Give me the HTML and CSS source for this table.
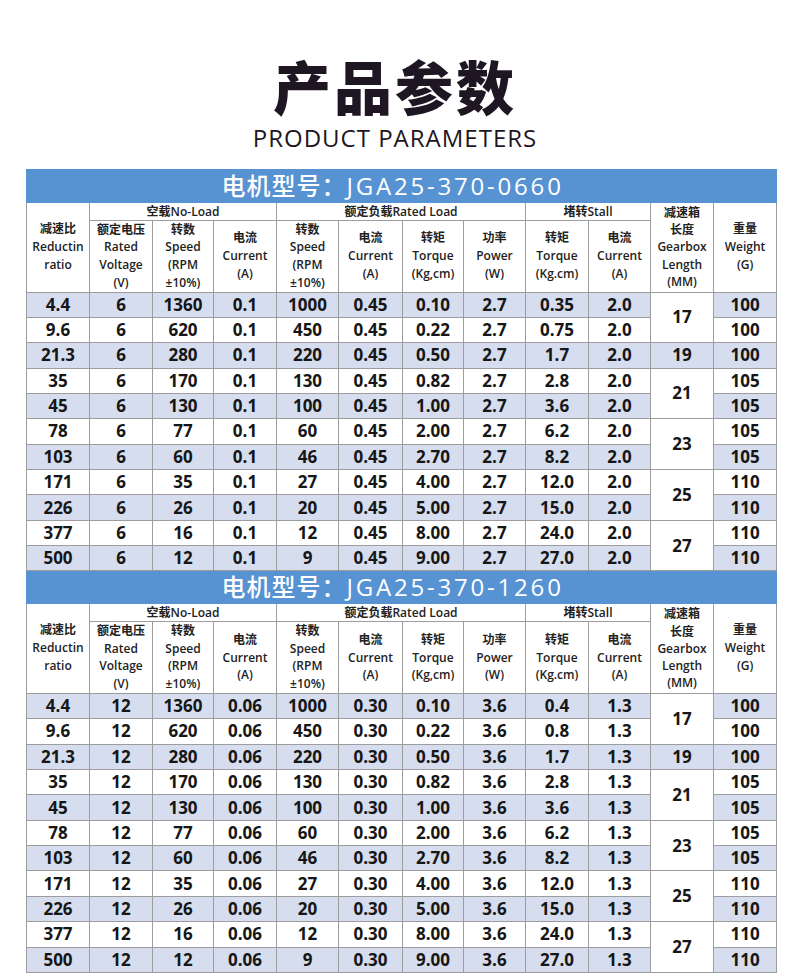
FILE: index.html
```html
<!DOCTYPE html>
<html lang="zh-CN">
<head>
<meta charset="utf-8">
<title>产品参数</title>
<link rel="stylesheet" href="styles.css">
</head>
<body>
<header class="head">
  <h1 class="title">产品参数</h1>
  <p class="subtitle">PRODUCT PARAMETERS</p>
</header>
<table class="spec">
  <colgroup>
    <col style="width:63px"><col style="width:63px"><col style="width:61px"><col style="width:63px">
    <col style="width:62px"><col style="width:64px"><col style="width:61px"><col style="width:62px">
    <col style="width:63px"><col style="width:62px"><col style="width:63px"><col style="width:63px">
  </colgroup>
  <tbody>
    <tr class="model"><td colspan="12">电机型号：<span class="code">JGA25-370-0660</span></td></tr>
    <tr class="h1">
      <td rowspan="2" class="side">减速比<br>Reductin<br>ratio</td>
      <td colspan="3">空载No-Load</td>
      <td colspan="4">额定负载Rated Load</td>
      <td colspan="2">堵转Stall</td>
      <td rowspan="2" class="tall">减速箱<br>长度<br>Gearbox<br>Length<br>(MM)</td>
      <td rowspan="2" class="side">重量<br>Weight<br>(G)</td>
    </tr>
    <tr class="h2">
      <td>额定电压<br>Rated<br>Voltage<br>(V)</td>
      <td>转数<br>Speed<br>(RPM<br>±10%)</td>
      <td>电流<br>Current<br>(A)</td>
      <td>转数<br>Speed<br>(RPM<br>±10%)</td>
      <td>电流<br>Current<br>(A)</td>
      <td>转矩<br>Torque<br>(Kg,cm)</td>
      <td>功率<br>Power<br>(W)</td>
      <td>转矩<br>Torque<br>(Kg.cm)</td>
      <td>电流<br>Current<br>(A)</td>
    </tr>
    <tr class="d alt"><td>4.4</td><td>6</td><td>1360</td><td>0.1</td><td>1000</td><td>0.45</td><td>0.10</td><td>2.7</td><td>0.35</td><td>2.0</td><td class="merge" rowspan="2">17</td><td>100</td></tr>
    <tr class="d"><td>9.6</td><td>6</td><td>620</td><td>0.1</td><td>450</td><td>0.45</td><td>0.22</td><td>2.7</td><td>0.75</td><td>2.0</td><td>100</td></tr>
    <tr class="d alt"><td>21.3</td><td>6</td><td>280</td><td>0.1</td><td>220</td><td>0.45</td><td>0.50</td><td>2.7</td><td>1.7</td><td>2.0</td><td>19</td><td>100</td></tr>
    <tr class="d"><td>35</td><td>6</td><td>170</td><td>0.1</td><td>130</td><td>0.45</td><td>0.82</td><td>2.7</td><td>2.8</td><td>2.0</td><td class="merge" rowspan="2">21</td><td>105</td></tr>
    <tr class="d alt"><td>45</td><td>6</td><td>130</td><td>0.1</td><td>100</td><td>0.45</td><td>1.00</td><td>2.7</td><td>3.6</td><td>2.0</td><td>105</td></tr>
    <tr class="d"><td>78</td><td>6</td><td>77</td><td>0.1</td><td>60</td><td>0.45</td><td>2.00</td><td>2.7</td><td>6.2</td><td>2.0</td><td class="merge" rowspan="2">23</td><td>105</td></tr>
    <tr class="d alt"><td>103</td><td>6</td><td>60</td><td>0.1</td><td>46</td><td>0.45</td><td>2.70</td><td>2.7</td><td>8.2</td><td>2.0</td><td>105</td></tr>
    <tr class="d"><td>171</td><td>6</td><td>35</td><td>0.1</td><td>27</td><td>0.45</td><td>4.00</td><td>2.7</td><td>12.0</td><td>2.0</td><td class="merge" rowspan="2">25</td><td>110</td></tr>
    <tr class="d alt"><td>226</td><td>6</td><td>26</td><td>0.1</td><td>20</td><td>0.45</td><td>5.00</td><td>2.7</td><td>15.0</td><td>2.0</td><td>110</td></tr>
    <tr class="d"><td>377</td><td>6</td><td>16</td><td>0.1</td><td>12</td><td>0.45</td><td>8.00</td><td>2.7</td><td>24.0</td><td>2.0</td><td class="merge" rowspan="2">27</td><td>110</td></tr>
    <tr class="d alt"><td>500</td><td>6</td><td>12</td><td>0.1</td><td>9</td><td>0.45</td><td>9.00</td><td>2.7</td><td>27.0</td><td>2.0</td><td>110</td></tr>

    <tr class="model"><td colspan="12">电机型号：<span class="code">JGA25-370-1260</span></td></tr>
    <tr class="h1">
      <td rowspan="2" class="side">减速比<br>Reductin<br>ratio</td>
      <td colspan="3">空载No-Load</td>
      <td colspan="4">额定负载Rated Load</td>
      <td colspan="2">堵转Stall</td>
      <td rowspan="2" class="tall">减速箱<br>长度<br>Gearbox<br>Length<br>(MM)</td>
      <td rowspan="2" class="side">重量<br>Weight<br>(G)</td>
    </tr>
    <tr class="h2">
      <td>额定电压<br>Rated<br>Voltage<br>(V)</td>
      <td>转数<br>Speed<br>(RPM<br>±10%)</td>
      <td>电流<br>Current<br>(A)</td>
      <td>转数<br>Speed<br>(RPM<br>±10%)</td>
      <td>电流<br>Current<br>(A)</td>
      <td>转矩<br>Torque<br>(Kg,cm)</td>
      <td>功率<br>Power<br>(W)</td>
      <td>转矩<br>Torque<br>(Kg.cm)</td>
      <td>电流<br>Current<br>(A)</td>
    </tr>
    <tr class="d alt"><td>4.4</td><td>12</td><td>1360</td><td>0.06</td><td>1000</td><td>0.30</td><td>0.10</td><td>3.6</td><td>0.4</td><td>1.3</td><td class="merge" rowspan="2">17</td><td>100</td></tr>
    <tr class="d"><td>9.6</td><td>12</td><td>620</td><td>0.06</td><td>450</td><td>0.30</td><td>0.22</td><td>3.6</td><td>0.8</td><td>1.3</td><td>100</td></tr>
    <tr class="d alt"><td>21.3</td><td>12</td><td>280</td><td>0.06</td><td>220</td><td>0.30</td><td>0.50</td><td>3.6</td><td>1.7</td><td>1.3</td><td>19</td><td>100</td></tr>
    <tr class="d"><td>35</td><td>12</td><td>170</td><td>0.06</td><td>130</td><td>0.30</td><td>0.82</td><td>3.6</td><td>2.8</td><td>1.3</td><td class="merge" rowspan="2">21</td><td>105</td></tr>
    <tr class="d alt"><td>45</td><td>12</td><td>130</td><td>0.06</td><td>100</td><td>0.30</td><td>1.00</td><td>3.6</td><td>3.6</td><td>1.3</td><td>105</td></tr>
    <tr class="d"><td>78</td><td>12</td><td>77</td><td>0.06</td><td>60</td><td>0.30</td><td>2.00</td><td>3.6</td><td>6.2</td><td>1.3</td><td class="merge" rowspan="2">23</td><td>105</td></tr>
    <tr class="d alt"><td>103</td><td>12</td><td>60</td><td>0.06</td><td>46</td><td>0.30</td><td>2.70</td><td>3.6</td><td>8.2</td><td>1.3</td><td>105</td></tr>
    <tr class="d"><td>171</td><td>12</td><td>35</td><td>0.06</td><td>27</td><td>0.30</td><td>4.00</td><td>3.6</td><td>12.0</td><td>1.3</td><td class="merge" rowspan="2">25</td><td>110</td></tr>
    <tr class="d alt"><td>226</td><td>12</td><td>26</td><td>0.06</td><td>20</td><td>0.30</td><td>5.00</td><td>3.6</td><td>15.0</td><td>1.3</td><td>110</td></tr>
    <tr class="d"><td>377</td><td>12</td><td>16</td><td>0.06</td><td>12</td><td>0.30</td><td>8.00</td><td>3.6</td><td>24.0</td><td>1.3</td><td class="merge" rowspan="2">27</td><td>110</td></tr>
    <tr class="d alt"><td>500</td><td>12</td><td>12</td><td>0.06</td><td>9</td><td>0.30</td><td>9.00</td><td>3.6</td><td>27.0</td><td>1.3</td><td>110</td></tr>
  </tbody>
</table>
</body>
</html>
```

FILE: styles.css
```css
html, body {
  margin: 0;
  padding: 0;
  background: #ffffff;
}
body {
  font-family: "Open Sans", "Noto Sans CJK SC", sans-serif;
  color: #1a1a1a;
}
.head {
  text-align: center;
  padding-top: 53px;
}
.title {
  margin: 0;
  font-family: "Noto Sans CJK SC", sans-serif;
  font-weight: 900;
  font-size: 58px;
  line-height: 64px;
  letter-spacing: 3px;
  color: #1e1622;
}
.subtitle {
  margin: 0;
  padding-top: 6px;
  font-family: "Open Sans", sans-serif;
  font-weight: 400;
  font-size: 24px;
  line-height: 30px;
  letter-spacing: 1px;
  color: #1e1622;
}
.spec {
  margin: 16px 0 0 26px;
  width: 750px;
  table-layout: fixed;
  border-collapse: collapse;
}
.spec td {
  border: 1px solid #9d9d9d;
  padding: 0;
  text-align: center;
  vertical-align: middle;
  overflow: hidden;
  white-space: nowrap;
}
.model td {
  background: #5792d2;
  border-color: #5792d2;
  color: #ffffff;
  font-family: "Open Sans", "Noto Sans CJK SC", sans-serif;
  font-weight: 500;
  font-size: 24px;
  letter-spacing: 1px;
  height: 31.5px;
  line-height: 30px;
  padding-right: 18px;
}
.model .code {
  font-weight: 500;
  letter-spacing: 2.8px;
}
.h1 td, .h2 td {
  font-family: "Open Sans", "Noto Sans CJK SC", sans-serif;
  font-size: 12px;
  font-weight: 600;
  color: #222222;
  background: #ffffff;
}
.h1 td {
  height: 17px;
  line-height: 17px;
}
.h1 td.side {
  line-height: 18px;
}
.h1 td.tall {
  line-height: 17.2px;
}
.h2 td {
  height: 71px;
  line-height: 17.75px;
}
.d td {
  height: 24.36px;
  font-size: 17px;
  line-height: 22px;
  font-weight: 700;
  color: #161616;
  background: #ffffff;
}
.d.alt td {
  background: #d5ddef;
}
.d.alt td.merge,
.d td.merge {
  background: #ffffff;
}
```
